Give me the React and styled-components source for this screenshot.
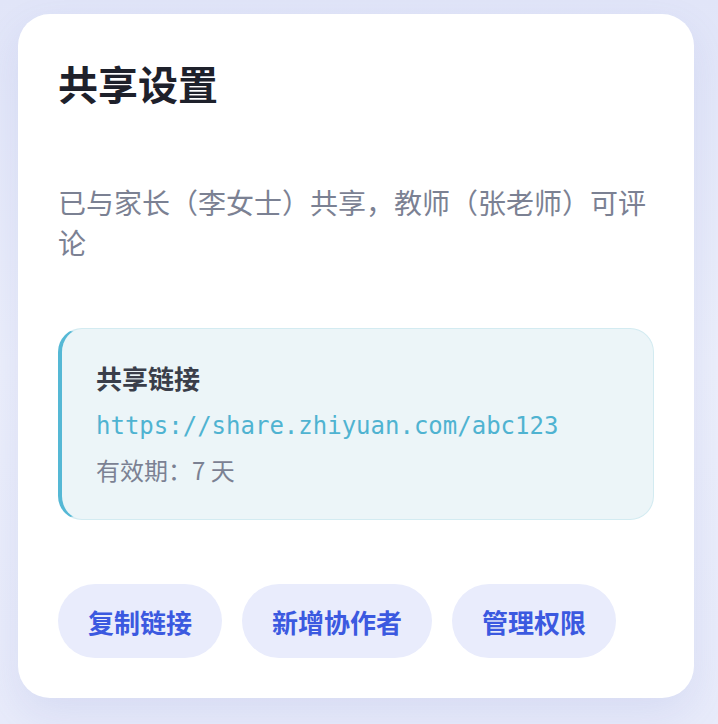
import styled, { createGlobalStyle } from 'styled-components';

const GlobalStyle = createGlobalStyle`
  html, body {
    margin: 0;
    padding: 0;
  }
  body {
    min-height: 724px;
    background: linear-gradient(180deg, #e1e5f8 0%, #eceffb 50%, #e8ebfa 100%);
    font-family: "Noto Sans CJK SC", "Noto Sans", sans-serif;
  }
`;

const Page = styled.div`
  padding: 14px 24px 27px 18px;
`;

const Card = styled.section`
  background: #ffffff;
  border-radius: 32px;
  padding: 40px;
  box-shadow: 0 16px 40px rgba(90, 105, 200, 0.12);
`;

const Title = styled.h1`
  margin: 0;
  font-size: 40px;
  line-height: 58px;
  font-weight: 700;
  color: #1e212b;
`;

const Subtitle = styled.p`
  margin: 70px 0 0;
  font-size: 28px;
  line-height: 40px;
  color: #7b8193;
`;

const LinkBox = styled.div`
  margin-top: 66px;
  background: #ecf5f8;
  border: 1px solid #d3ebf1;
  border-left: 4px solid #55b8d5;
  border-radius: 24px;
  padding: 31px 34px 32px;
  display: flex;
  flex-direction: column;
`;

const LinkLabel = styled.div`
  font-size: 26px;
  line-height: 36px;
  font-weight: 700;
  color: #3a3e4a;
`;

const LinkUrl = styled.div`
  margin-top: 12px;
  font-family: "DejaVu Sans Mono", "Liberation Mono", monospace;
  font-size: 24px;
  line-height: 36px;
  color: #4fb3d1;
`;

const Expiry = styled.div`
  margin-top: 9px;
  font-size: 24px;
  line-height: 34px;
  color: #7b8193;
`;

const Actions = styled.div`
  display: flex;
  gap: 20px;
  margin-top: 64px;
`;

const ActionButton = styled.button`
  height: 74px;
  padding: 0 30px;
  border: none;
  border-radius: 37px;
  background: #e9ecfc;
  color: #3b59e0;
  font-family: "Noto Sans CJK SC", "Noto Sans", sans-serif;
  font-size: 26px;
  font-weight: 700;
  cursor: pointer;
`;

const actions = ['复制链接', '新增协作者', '管理权限'];

export default function App() {
  return (
    <>
      <GlobalStyle />
      <Page>
        <Card>
          <Title>共享设置</Title>
          <Subtitle>已与家长（李女士）共享，教师（张老师）可评论</Subtitle>
          <LinkBox>
            <LinkLabel>共享链接</LinkLabel>
            <LinkUrl>https://share.zhiyuan.com/abc123</LinkUrl>
            <Expiry>有效期：7 天</Expiry>
          </LinkBox>
          <Actions>
            {actions.map((a) => (
              <ActionButton key={a}>{a}</ActionButton>
            ))}
          </Actions>
        </Card>
      </Page>
    </>
  );
}
